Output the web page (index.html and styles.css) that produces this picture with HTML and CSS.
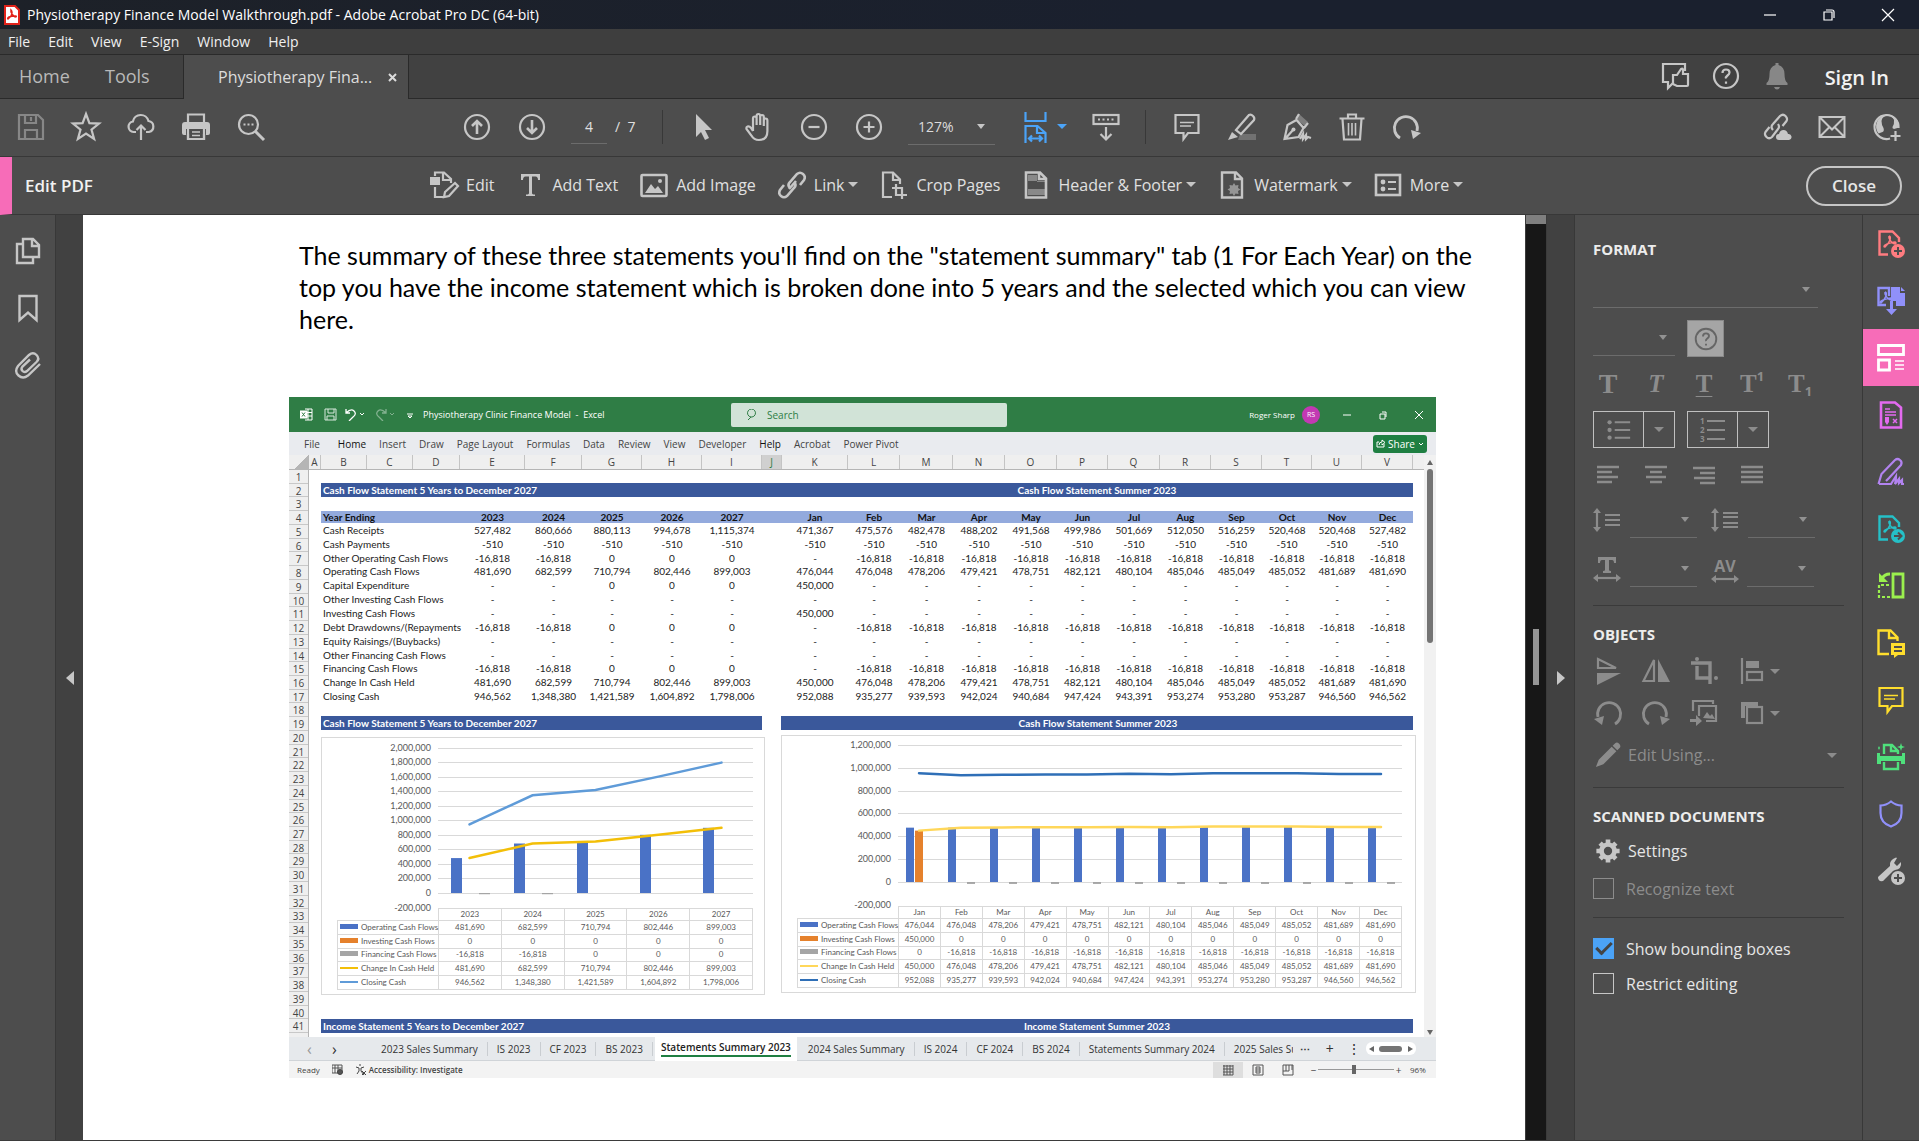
FILE: index.html
```html
<!DOCTYPE html>
<html lang="en">
<head>
<meta charset="utf-8">
<title>Physiotherapy Finance Model Walkthrough.pdf - Adobe Acrobat Pro DC (64-bit)</title>
<link rel="stylesheet" href="styles.css">
</head>
<body>
<svg class="defs" aria-hidden="true">
  <symbol id="save" viewBox="0 0 28 28"><path d="M2 2h19l5 5v19H2zM8 2v8h11V2M8 26V17h12v9M14 4v4"/></symbol>
  <symbol id="star" viewBox="0 0 28 28"><path d="M14 1l3.400 9.200 9.600.400-7.500 6 2.600 9.400L14 20.600 5.900 26l2.600-9.400L1 10.600l9.600-.400z"/></symbol>
  <symbol id="cloud" viewBox="0 0 28 28"><path d="M9 19H6.500a5.300 5.300 0 0 1-.600-10.500A8 8 0 0 1 21.500 8a5.600 5.600 0 0 1 .500 11H19M14 27V13M9.500 17L14 12.500l4.500 4.500"/></symbol>
  <symbol id="print" viewBox="0 0 28 28"><path d="M6 9V1.500h16V9M6 21v5h16v-5"/><path class="f" d="M0 12q0-3 3-3h22q3 0 3 3v8q0 2-2 2h-2v-6H4v6H2q-2 0-2-2z"/><path d="M6 15v11h16V15"/><path d="M10 19h8M10 22.500h8" stroke-width="1.500"/></symbol>
  <symbol id="find" viewBox="0 0 28 28"><circle cx="11.500" cy="11.500" r="9.500"/><path d="M18.500 18.500L27 27" stroke-width="3"/><path d="M6.500 11.500h2M10.500 11.500h2M14.500 11.500h2"/></symbol>
  <symbol id="up" viewBox="0 0 28 28"><circle cx="14" cy="14" r="12"/><path d="M14 21V8M9 13l5-5 5 5" stroke-width="2.600"/></symbol>
  <symbol id="down" viewBox="0 0 28 28"><circle cx="14" cy="14" r="12"/><path d="M14 7v13M9 15l5 5 5-5" stroke-width="2.600"/></symbol>
  <symbol id="arrow" viewBox="0 0 28 28"><path class="f" d="M6 1v23l5-5 4 8 4-2-4-8h7z"/></symbol>
  <symbol id="hand" viewBox="0 0 28 28"><path d="M8 18V5.500q0-2 1.800-2t1.800 2V12 3q0-2 1.800-2t1.800 2v9V4q0-2 1.800-2t1.800 2v9V7.500q0-2 1.800-2t1.800 2V18q0 9-8.500 9-5 0-7.500-4.500L1.500 16q-.500-2 1-2.500 2-.500 3.500 1.500l2 3"/></symbol>
  <symbol id="minus" viewBox="0 0 28 28"><circle cx="14" cy="14" r="12"/><path d="M8.500 14h11"/></symbol>
  <symbol id="plus" viewBox="0 0 28 28"><circle cx="14" cy="14" r="12"/><path d="M8.500 14h11M14 8.500v11"/></symbol>
  <symbol id="fit" viewBox="0 0 28 28"><path d="M1.500-1v9h20V-1M1.500 30V13h12l8 7v10M13 13v7h8M5 25.500h13M8 22.500l-3 3 3 3M15 22.500l3 3-3 3"/></symbol>
  <symbol id="keys" viewBox="0 0 28 28"><rect x="1.500" y="2" width="25" height="9"/><path d="M6 6.500h2M10.500 6.500h2M15 6.500h2M19.500 6.500h2M14 14v12M8.500 21l5.500 5.500 5.500-5.500"/></symbol>
  <symbol id="comment" viewBox="0 0 28 28"><path d="M2.500 2h23v18H15l-4.500 6v-6h-8z"/><path d="M7 9.500h14M7 13h11" stroke-width="1.600"/></symbol>
  <symbol id="marker" viewBox="0 0 28 28"><path class="f" opacity=".3" d="M12 21h16v6H10z"/><path d="M8 17L21 2q2-1 4 1t1 4L13 21z"/><path class="f" d="M0 27l4-8 6 5z"/></symbol>
  <symbol id="pen" viewBox="0 0 28 28"><path class="f" opacity=".4" d="M16 1l9 8-3 4-9-7z"/><path d="M1.500 26l3-14 9-5 7 8-5 9zM2 26l8-9M16 1l-3 5M25 10l-4 5M17 26l3-5v5l3-4v4l2-2 3 1"/><circle class="f" cx="10.500" cy="16.500" r="2"/></symbol>
  <symbol id="trash" viewBox="0 0 28 28"><path d="M1.500 5.500h25M10 5V1.500h8V5M4.500 6l1.500 20.500h16L23.500 6"/><path d="M10.500 10v12.500M14 10v12.500M17.500 10v12.500" stroke-width="1.600"/></symbol>
  <symbol id="redo" viewBox="0 0 28 28"><path d="M7 25A11.500 11.500 0 1 1 24 18" stroke-width="2.800"/><path class="f" d="M18 17l10 3-8 6z"/></symbol>
  <symbol id="undo" viewBox="0 0 28 28"><path d="M21 25A11.500 11.500 0 1 0 4 18" stroke-width="2.800"/><path class="f" d="M10 17L0 20l8 6z"/></symbol>
  <symbol id="link" viewBox="0 0 28 28"><path d="M12 17q-3-3 0-6l7-8q3-2.500 6 0t1 6l-4 5M16 11q3 3 0 6l-7 8q-3 2.500-6 0t-1-6l4-5M11 18l7-8" stroke-width="2.600"/></symbol>
  <symbol id="linkcloud" viewBox="0 0 28 28"><path d="M10 17q-3-3 0-6l7-8q3-2.500 5.500 0t1 5l-4 5M15 11q2 3 0 5l-6 8q-3 2.500-5.500 0t-1-5l4-5"/><path class="f" d="M16 27a3 3 0 0 1 0-6q1-4 4.500-4t4.500 4a3 3 0 0 1 1 6z"/></symbol>
  <symbol id="mail" viewBox="0 0 28 28"><path d="M1.500 4h25v20h-25zM2 4.500l12 12 12-12M2 23.500l9.500-9.500M26 23.500L16.500 14" stroke-width="2"/></symbol>
  <symbol id="user" viewBox="0 0 28 28"><path d="M17 25.500A12 12 0 1 1 25.500 15"/><path class="f" fill-rule="evenodd" d="M14 1.500a12 12 0 0 1 12 13l-5 1.500q-2-.500-1.500-2 2-3 1.500-7-1-4-6-4-6 0-6.500 5 0 4 2 7 1 3-1 4l-4 1.500A12 12 0 0 1 14 1.500z"/><path d="M22.500 18v10M17.500 23h10"/></symbol>
  <symbol id="like" viewBox="0 0 28 28"><path d="M24 9V2H2v18h5v6l5-5"/><path d="M12 13h4l4-6q2-1 2 1v4h5v11q0 1-1 1H16l-4-2z"/></symbol>
  <symbol id="help" viewBox="0 0 28 28"><circle cx="14" cy="14" r="12"/><path d="M10.500 11q0-3.500 3.500-3.500t3.500 3q0 1.500-2 3T14 16.500M14 19.500v2.200"/></symbol>
  <symbol id="bell" viewBox="0 0 28 28"><path class="f" d="M12.500 1h3v2q6 2 6 9 0 7 3 9v2h-21v-2q3-2 3-9 0-7 6-9zM11 25h6q-1 2.500-3 2.500T11 25z"/></symbol>
  <symbol id="edit" viewBox="0 0 28 28"><path class="f" d="M0 6h10v8H0z"/><path d="M5 5V1.500h9l7 6.500v4M13 2v7h7M5 16v10h8"/><path d="M14 26l1-5 10-9 3 3-9 10z"/></symbol>
  <symbol id="T" viewBox="0 0 28 28"><path class="f" d="M5 3h19v6h-2q0-3.500-2.500-3.500H16V22q0 1.500 3 1.500V25H10v-1.500q3 0 3-1.500V5.500H9.500Q7 5.500 7 9H5z"/></symbol>
  <symbol id="image" viewBox="0 0 28 28"><rect x="1.500" y="4" width="25" height="21" rx="1" stroke-width="2.600"/><path class="f" d="M5 22l6-9 4 5 3-3 5 7z"/><circle class="f" cx="20" cy="10" r="2"/></symbol>
  <symbol id="croppage" viewBox="0 0 28 28"><path d="M12 26H3V1.500h10l7 7V13M13 2v7h7M12 17h10v11M16 13v11h11"/></symbol>
  <symbol id="header" viewBox="0 0 28 28"><path class="f" opacity=".5" d="M6 4h9v7h8v-1H6zM6 18h17v6H6z"/><path d="M4 1.500h14l6 6v19H4zM17 2v6h6" stroke-width="2.600"/></symbol>
  <symbol id="water" viewBox="0 0 28 28"><path class="f" opacity=".6" d="M16 12l1.500 2.500 3-.500-.500 3 2.500 1.500-2.500 1.500.500 3-3-.500L16 25l-1.500-2.500-3 .500.500-3-2.500-1.500 2.500-1.500-.500-3 3 .500z"/><path d="M4 1.500h14l6 6v19H4zM17 2v6h6" stroke-width="2.400"/></symbol>
  <symbol id="more" viewBox="0 0 28 28"><rect x="2" y="4" width="24" height="20" stroke-width="2.600"/><circle class="f" cx="9" cy="11" r="2.400"/><circle class="f" cx="9" cy="18" r="2.400"/><path d="M14 11h8M14 18h8"/></symbol>
  <symbol id="pages" viewBox="0 0 28 28"><path d="M9 2h10l6 6v12H9zM18 2v7h7M8 7H3v19h16v-5" stroke-width="2.400"/></symbol>
  <symbol id="mark" viewBox="0 0 28 28"><path d="M5.500 2h17v24L14 18.500 5.500 26z" stroke-width="2.400"/></symbol>
  <symbol id="clip" viewBox="0 0 28 28"><path d="M26 13L14 24.500q-5 4-9.500 0t-.500-9.500L15 4q4-3.500 7.500 0t0 7L13 20q-2.500 2-4.500 0t0-4.500L16 8.500" stroke-width="2.400"/></symbol>
  <symbol id="bullets" viewBox="0 0 28 28"><path d="M9 5h18M9 14h18M9 23h18"/><circle class="f" cx="3" cy="5" r="2.500"/><circle class="f" cx="3" cy="14" r="2.500"/><circle class="f" cx="3" cy="23" r="2.500"/></symbol>
  <symbol id="al" viewBox="0 0 28 28"><path d="M3 6h22M3 11h15M3 16h21M3 21h15" stroke-width="2.600"/></symbol>
  <symbol id="ac" viewBox="0 0 28 28"><path d="M3 6h22M8 11h12M4 16h20M8 21h12" stroke-width="2.600"/></symbol>
  <symbol id="ar" viewBox="0 0 28 28"><path d="M3 7h22M10 12h15M4 17h21M10 22h15" stroke-width="2.600"/></symbol>
  <symbol id="aj" viewBox="0 0 28 28"><path d="M3 6h22M3 11h22M3 16h22M3 21h22" stroke-width="2.600"/></symbol>
  <symbol id="ls" viewBox="0 0 28 28"><path d="M4 5v18M12 9h15M12 14h15M12 19h15"/><path class="f" d="M0 7l4-5 4 5zM0 21l4 5 4-5z"/></symbol>
  <symbol id="ps" viewBox="0 0 28 28"><path d="M4 5v18M12 7h15M12 11h15M12 17h15M12 21h15"/><path class="f" d="M0 7l4-5 4 5zM0 21l4 5 4-5z"/></symbol>
  <symbol id="ts" viewBox="0 0 28 28"><path d="M3 23h22"/><path class="f" d="M5 19l-5 4 5 4zM23 19l5 4-5 4zM5 2h18v6h-2q0-3-2-3h-3v10q0 1 2 1v2h-8v-2q2 0 2-1V5H9Q7 5 7 8H5z"/></symbol>
  <symbol id="lr" viewBox="0 0 28 8"><path d="M3 4h22"/><path class="f" d="M5 0L0 4l5 4zM23 0l5 4-5 4z"/></symbol>
  <symbol id="fv" viewBox="0 0 28 28"><path d="M4 2v9h18zM4 2v9" /><path class="f" d="M3 16h24L3 28z"/></symbol>
  <symbol id="fh" viewBox="0 0 28 28"><path d="M12 3v21H1.500z"/><path class="f" d="M16 2v23h12z"/></symbol>
  <symbol id="crop" viewBox="0 0 28 28"><path d="M1 6h19v21M7 9v12h14" stroke-width="3.400"/><circle class="f" cx="7" cy="2" r="2"/><circle class="f" cx="26" cy="21" r="2"/></symbol>
  <symbol id="oal" viewBox="0 0 28 28"><path d="M4 1v26"/><path class="f" d="M8 4h13v7H8z"/><rect x="9" y="15" width="15" height="8"/></symbol>
  <symbol id="rep" viewBox="0 0 28 28"><path d="M3 12V2h20v3M9 17V7h17v15H16"/><path class="f" d="M13 19l4-6 3 4 2-2 3 5zM0 20h6v-4l6 6-6 5v-4H0z"/></symbol>
  <symbol id="arr" viewBox="0 0 28 28"><path class="f" d="M3 3h17v4H7v12H3z"/><rect x="9" y="8" width="15" height="16"/></symbol>
  <symbol id="pencil" viewBox="0 0 28 28"><path class="f" d="M1 27l3-8L18 5l5 5L9 24zM19 4l3-3q2-1 4 1t1 4l-3 3z"/></symbol>
  <symbol id="gear" viewBox="0 0 28 28"><circle cx="14" cy="14" r="7" stroke-width="5"/><path d="M14 1.500v4M14 22.500v4M1.500 14h4M22.500 14h4M5.500 5.500l2.500 2.500M20 20l2.500 2.500M22.500 5.500L20 8M8 20l-2.500 2.500" stroke-width="5"/></symbol>
  <symbol id="acro" viewBox="0 0 28 28"><path d="M13 9q2 0 1 4-1 3-5 7-2 0 0-2 3-2 10-3 2 1 0 2-4-1-6-6 0-2 0-2" stroke-width="1.500"/></symbol>
  <symbol id="r1" viewBox="0 0 28 28"><path d="M11 24.500H2.500V1.500h13L22 8v4" stroke-width="2.400"/><use href="#acro" x="-1" y="-3" width="28" height="28"/><circle class="f" cx="21" cy="21" r="7"/><path class="cut" d="M21 17v8M17 21h8"/></symbol>
  <symbol id="r2" viewBox="0 0 28 28"><path d="M9 18H1.500V1H12v8" stroke-width="2.400"/><use href="#acro" x="-5" y="-4" width="28" height="28"/><path class="f" d="M14 0h9v6h5v13h-9v-5h-5zM24 0l4 4h-4zM13 14h3v8h4l-5.500 6L9 22h4z"/></symbol>
  <symbol id="r3" viewBox="0 0 28 28"><path d="M1.500 1.500h25v9h-25zM1.500 16h11v10h-11z" stroke-width="2.800"/><path d="M18 17h9M18 21h9M18 25h9" stroke-width="1.600"/></symbol>
  <symbol id="r4" viewBox="0 0 28 28"><path d="M4 1.500h14l6 5v20H4z" stroke-width="2.600"/><path d="M8 8h5M8 11h11M8 14h11M16 18l4 4M20 18l-4 4" stroke-width="1.500"/><path class="f" d="M8 16h4v5l-2 3-2-3z"/></symbol>
  <symbol id="r5" viewBox="0 0 28 28"><path d="M1.500 26l3-10L18 2q2.500-2 5 0t1 5L12 20l-3 3M2 26h12l5-8q0 5-1 8l4-5v4l3-3v4h2"/></symbol>
  <symbol id="r6" viewBox="0 0 28 28"><path d="M11 24.500H2.500V1.500h13L22 8v4" stroke-width="2.400"/><use href="#acro" x="-1" y="-3" width="28" height="28"/><circle class="f" cx="21" cy="21" r="7"/><path class="cut" d="M17 21h7M21 17.500l3.500 3.500-3.500 3.500"/></symbol>
  <symbol id="r7" viewBox="0 0 28 28"><path d="M16 2h10v23H16z" stroke-width="2.800"/><path d="M13 25H2V13h11" stroke-dasharray="3 2"/><path d="M13 2q-6 0-8 5" stroke-width="3"/><path class="f" d="M2 1v9h9z"/></symbol>
  <symbol id="r8" viewBox="0 0 28 28"><path d="M12 25H1.500V1.500h12l7 7V12M12 2v7h8" stroke-width="2.400"/><path class="f" d="M14 14h14v12h-7l-4 3v-3h-3z"/><path class="cut" d="M17 18h8M17 22h8" stroke-width="1.300"/></symbol>
  <symbol id="r10" viewBox="0 0 28 28"><path d="M7 11V2h8l6 6v3M14 2v6h6M7 19v7h14v-7" stroke-width="2.400"/><path class="f" d="M0 10h3v3h22v-3h3v11h-4v-3H4v3H0zM24 0l1 3 3 1-3 1-1 3-1-3-3-1 3-1zM2 3l1 2-1 2-1-2z"/></symbol>
  <symbol id="r11" viewBox="0 0 28 28"><path d="M14 1.500q5 4 10.500 4V13q0 10-10.500 13.500Q3.500 23 3.500 13V5.500q5.500 0 10.500-4z"/></symbol>
  <symbol id="r12" viewBox="0 0 28 28"><path class="f" d="M1 20L13 9q-1-6 6-8.500l1 .500-3 5 3 3 4-4q1 7-6 8l-2 1L6 24q-5 1-5-4z"/><circle class="f" cx="21" cy="21" r="7"/><path class="cut" d="M21 17v8M17 21h8"/></symbol>
</svg>

<header class="titlebar">
  <svg class="app" viewBox="0 0 16 20"><path d="M1 1h10l4 4v14H1z" fill="#fff" stroke="#e2231a" stroke-width="2"/><path d="M7 5q2 2 0 6l-3 3q-1-1 1-2t7-1q1 1-1 1-3-2-4-5z" fill="none" stroke="#e2231a" stroke-width="1.500"/></svg>
  <h1>Physiotherapy Finance Model Walkthrough.pdf - Adobe Acrobat Pro DC (64-bit)</h1>
  <div class="win">
    <button aria-label="Minimize"><svg viewBox="0 0 12 12"><path d="M0 6h12"/></svg></button>
    <button aria-label="Restore"><svg viewBox="0 0 12 12"><path d="M1 3h8v8H1zM3 1h6q2 0 2 2v6"/></svg></button>
    <button aria-label="Close window"><svg viewBox="0 0 12 12"><path d="M0 0l12 12M12 0L0 12"/></svg></button>
  </div>
</header>

<nav class="menu"><a href="#">File</a><a href="#">Edit</a><a href="#">View</a><a href="#">E-Sign</a><a href="#">Window</a><a href="#">Help</a></nav>

<div class="tabs">
  <a href="#" class="t-home">Home</a><a href="#" class="t-tools">Tools</a>
  <div class="t-doc"><span>Physiotherapy Fina...</span><button aria-label="Close tab"><svg viewBox="0 0 9 9"><path d="M1 1l7 7M8 1L1 8"/></svg></button></div>
  <div class="t-right">
    <button aria-label="Feedback"><svg class="i"><use href="#like"/></svg></button>
    <button aria-label="Help"><svg class="i"><use href="#help"/></svg></button>
    <button aria-label="Notifications" class="dim"><svg class="i"><use href="#bell"/></svg></button>
    <a href="#">Sign In</a>
  </div>
</div>

<div class="toolbar">
  <button class="tb dim" aria-label="Save"><svg class="i"><use href="#save"/></svg></button>
  <button class="tb" aria-label="Star"><svg class="i"><use href="#star"/></svg></button>
  <button class="tb" aria-label="Upload"><svg class="i"><use href="#cloud"/></svg></button>
  <button class="tb" aria-label="Print"><svg class="i"><use href="#print"/></svg></button>
  <button class="tb" aria-label="Find"><svg class="i"><use href="#find"/></svg></button>
  <div class="mid">
    <button class="tb" aria-label="Previous page"><svg class="i"><use href="#up"/></svg></button>
    <button class="tb" aria-label="Next page"><svg class="i"><use href="#down"/></svg></button>
    <input class="page-no" aria-label="Page number" value="4"><span class="of">/&nbsp; 7</span>
    <i class="sep"></i>
    <button class="tb" aria-label="Select"><svg class="i"><use href="#arrow"/></svg></button>
    <button class="tb" aria-label="Pan"><svg class="i"><use href="#hand"/></svg></button>
    <button class="tb" aria-label="Zoom out"><svg class="i"><use href="#minus"/></svg></button>
    <button class="tb" aria-label="Zoom in"><svg class="i"><use href="#plus"/></svg></button>
    <span class="sel zoom"><select aria-label="Zoom"><option>127%</option></select></span>
    <button class="tb fit" aria-label="Fit width"><svg class="i"><use href="#fit"/></svg><i class="car"></i></button>
    <button class="tb" aria-label="Keyboard"><svg class="i"><use href="#keys"/></svg></button>
    <i class="sep s2"></i>
    <button class="tb" aria-label="Comment"><svg class="i"><use href="#comment"/></svg></button>
    <button class="tb" aria-label="Highlight"><svg class="i"><use href="#marker"/></svg></button>
    <button class="tb" aria-label="Sign"><svg class="i"><use href="#pen"/></svg></button>
    <button class="tb" aria-label="Delete"><svg class="i"><use href="#trash"/></svg></button>
    <button class="tb" aria-label="Rotate"><svg class="i"><use href="#redo"/></svg></button>
  </div>
  <div class="end">
    <button class="tb" aria-label="Share link"><svg class="i"><use href="#linkcloud"/></svg></button>
    <button class="tb" aria-label="Email"><svg class="i"><use href="#mail"/></svg></button>
    <button class="tb" aria-label="Add person"><svg class="i"><use href="#user"/></svg></button>
  </div>
</div>

<div class="editbar">
  <h2>Edit PDF</h2>
  <div class="tools">
    <button><svg class="i"><use href="#edit"/></svg>Edit</button>
    <button><svg class="i"><use href="#T"/></svg>Add Text</button>
    <button><svg class="i"><use href="#image"/></svg>Add Image</button>
    <button><svg class="i"><use href="#link"/></svg>Link<i class="car"></i></button>
    <button><svg class="i"><use href="#croppage"/></svg>Crop Pages</button>
    <button><svg class="i"><use href="#header"/></svg>Header &amp; Footer<i class="car"></i></button>
    <button><svg class="i"><use href="#water"/></svg>Watermark<i class="car"></i></button>
    <button><svg class="i"><use href="#more"/></svg>More<i class="car"></i></button>
  </div>
  <button class="close">Close</button>
</div>

<div class="work">
  <nav class="rail left">
    <button aria-label="Page thumbnails"><svg class="i"><use href="#pages"/></svg></button>
    <button aria-label="Bookmarks"><svg class="i"><use href="#mark"/></svg></button>
    <button aria-label="Attachments"><svg class="i"><use href="#clip"/></svg></button>
  </nav>
  <div class="gutter"><i class="tri l"></i></div>
  <main class="page">
    <p class="copy">The summary of these three statements you'll find on the "statement summary" tab (1 For Each Year) on the<br>top you have the income statement which is broken done into 5 years and the selected which you can view<br>here.</p>
    <figure class="excel">
      <div class="x-title">
        <div class="x-left">
          <svg class="x13" viewBox="0 0 13 13"><path d="M5 1h7v11H5M8 1v11M5 4.500h7M5 8h7" fill="none" stroke="#fff"/><path d="M0 3h7v7H0z" fill="#fff"/><path d="M2 4.500l3 4M5 4.500l-3 4" stroke="#2f7d45"/></svg>
          <svg class="x13 g1" viewBox="0 0 13 13"><path d="M1 1h11v11H1zM4 1v4h6V1M3 12V8h7v4" fill="none" stroke="#d7e8dc"/></svg>
          <svg class="x20" viewBox="0 0 20 13"><path d="M1 1v4h4M1 5q5-5 8-2t-1 6l-4 4" fill="none" stroke="#fff" stroke-width="1.300"/><path d="M15 5l2 2 2-2" fill="none" stroke="#fff"/></svg>
          <svg class="x20 fade" viewBox="0 0 20 13"><path d="M11 1v4H7M11 5Q6 0 3 3t1 6l4 4" fill="none" stroke="#fff" stroke-width="1.300"/><path d="M15 5l2 2 2-2" fill="none" stroke="#fff"/></svg>
          <svg class="x5" viewBox="0 0 6 6"><path d="M0 1h6M1 3l2 2 2-2z" fill="none" stroke="#fff"/></svg>
          <span>Physiotherapy Clinic Finance Model &nbsp;-&nbsp; Excel</span>
        </div>
        <label class="x-search"><svg viewBox="0 0 12 12"><path d="M4 8L1 11M4 8a4 4 0 1 1 1 0z" fill="none" stroke="#2f7d45"/></svg><input aria-label="Search" placeholder="Search"></label>
        <div class="x-right"><span>Roger Sharp</span><b class="ava">RS</b>
          <svg viewBox="0 0 8 8"><path d="M0 4h8"/></svg><svg viewBox="0 0 8 8"><path d="M1 3h5v5H1zM3 1h4v5"/></svg><svg viewBox="0 0 8 8"><path d="M0 0l8 8M8 0L0 8"/></svg></div>
      </div>
      <nav class="x-menu"><a href="#">File</a><a href="#" class="on">Home</a><a href="#">Insert</a><a href="#">Draw</a><a href="#">Page Layout</a><a href="#">Formulas</a><a href="#">Data</a><a href="#">Review</a><a href="#">View</a><a href="#">Developer</a><a href="#" class="on">Help</a><a href="#">Acrobat</a><a href="#">Power Pivot</a><button><svg class="sh" viewBox="0 0 9 9"><path d="M3 3H1v5h7V5M3 6q0-3 3-3V1l3 2.500L6 6V4.500"/></svg>Share<svg class="cv" viewBox="0 0 6 4"><path d="M1 1l2 2 2-2"/></svg></button></nav>
      <div class="x-grid">
        <div class="rownums"><i class="corner"></i><ol id="rows"></ol></div>
        <div class="cells">
          <div class="letters" id="letters"></div>
          <div class="sheet">
            <div class="band full"><span>Cash Flow Statement 5 Years to December 2027</span><span class="b2">Cash Flow Statement Summer 2023</span></div>
            <table class="flows" id="flows"></table>
            <div class="bands"><div class="band"><span>Cash Flow Statement 5 Years to December 2027</span></div><div class="band mid-t"><span>Cash Flow Statement Summer 2023</span></div></div>
            <div class="charts"><section class="chart" id="c1"></section><section class="chart up2" id="c2"></section></div>
            <div class="band full"><span>Income Statement 5 Years to December 2027</span><span class="b2">Income Statement Summer 2023</span></div>
          </div>
        </div>
        <div class="x-scroll"><i class="tri u"></i><i class="thumb"></i><i class="tri d"></i></div>
      </div>
      <nav class="x-tabs"><span class="ch">&#8249;</span><span class="ch ch2">&#8250;</span><a href="#">2023 Sales Summary</a><a href="#">IS 2023</a><a href="#">CF 2023</a><a href="#">BS 2023</a><a href="#" class="cur"><span>Statements Summary 2023</span></a><a href="#">2024 Sales Summary</a><a href="#">IS 2024</a><a href="#">CF 2024</a><a href="#">BS 2024</a><a href="#">Statements Summary 2024</a><a href="#" class="cutoff">2025 Sales Su</a><span class="dots">&#8943;</span><span class="add">+</span><span class="add">&#8942;</span><span class="hs"><i class="tri l"></i><i class="bar"></i><i class="tri"></i></span></nav>
      <div class="x-status"><span>Ready</span>
        <svg class="s1" viewBox="0 0 11 11"><path d="M0 1h10v8H0zM0 4h10M3 1v8M6 1v8" fill="none" stroke="#555"/><circle cx="8" cy="8" r="2.500" fill="#555"/></svg>
        <svg class="s2i" viewBox="0 0 11 11"><path d="M5 0v2M1 3l3 1v3L2 10M9 3L6 4v3l3 4M7 7l4 4M11 7l-4 4" fill="none" stroke="#444"/></svg>
        <b>Accessibility: Investigate</b>
        <div class="views"><span class="vsel"><svg viewBox="0 0 10 10"><path d="M0 1h10M0 4h10M0 7h10M0 10h10M1 0v10M4 0v10M7 0v10M10 0v10"/></svg></span><span><svg viewBox="0 0 10 10"><path d="M0 0h10v10H0zM3 2h4v6H3zM3 4h4M3 6h4"/></svg></span><span><svg viewBox="0 0 10 10"><path d="M0 0h10v10H0zM3 0v6M6 0v6H0M9 0v5"/></svg></span></div>
        <span class="pm">&minus;</span><input type="range" aria-label="Sheet zoom" min="0" max="100" value="47"><span class="pm">+</span><span class="pc">96%</span></div>
    </figure>
  </main>
  <div class="vbar"><i class="vthumb"></i><i class="grip"></i></div>
  <div class="gutter"><i class="tri"></i></div>
  <aside class="panel">
    <h3>FORMAT</h3>
    <span class="sel font"><select aria-label="Font"></select></span>
    <div class="row r-size"><span class="sel size"><select aria-label="Font size"></select></span><button class="swatch" aria-label="Colour"><svg class="i"><use href="#help"/></svg></button></div>
    <div class="cells5 r-t">
      <button class="g tb1">T</button><button class="g it">T</button><button class="g un">T</button><button class="g">T<sup>1</sup></button><button class="g">T<sub>1</sub></button>
    </div>
    <div class="row lists">
      <div class="lb"><button aria-label="Bullets"><svg class="i"><use href="#bullets"/></svg></button><button class="dd" aria-label="Bullet style"><i class="car"></i></button></div>
      <div class="lb"><button aria-label="Numbering" class="nums"><span>1<br>2<br>3</span><svg viewBox="0 0 18 24"><path d="M0 3h18M0 12h18M0 21h18"/></svg></button><button class="dd" aria-label="Number style"><i class="car"></i></button></div>
    </div>
    <div class="cells5 r-al">
      <button aria-label="Align left"><svg class="i"><use href="#al"/></svg></button><button aria-label="Align centre"><svg class="i"><use href="#ac"/></svg></button><button aria-label="Align right"><svg class="i"><use href="#ar"/></svg></button><button aria-label="Justify"><svg class="i"><use href="#aj"/></svg></button>
    </div>
    <div class="row sp"><svg class="i"><use href="#ls"/></svg><span class="sel"><select aria-label="Line spacing"></select></span><svg class="i"><use href="#ps"/></svg><span class="sel"><select aria-label="Paragraph spacing"></select></span></div>
    <div class="row sp"><svg class="i"><use href="#ts"/></svg><span class="sel"><select aria-label="Horizontal scale"></select></span><span class="av">AV<svg><use href="#lr"/></svg></span><span class="sel"><select aria-label="Character spacing"></select></span></div>
    <hr>
    <h3>OBJECTS</h3>
    <div class="cells5 ob">
      <button aria-label="Flip vertical"><svg class="i"><use href="#fv"/></svg></button><button aria-label="Flip horizontal"><svg class="i"><use href="#fh"/></svg></button><button aria-label="Crop"><svg class="i"><use href="#crop"/></svg></button><button aria-label="Align objects"><svg class="i"><use href="#oal"/></svg></button><i class="car"></i>
      <button aria-label="Rotate left"><svg class="i"><use href="#undo"/></svg></button><button aria-label="Rotate right"><svg class="i"><use href="#redo"/></svg></button><button aria-label="Replace image"><svg class="i"><use href="#rep"/></svg></button><button aria-label="Arrange"><svg class="i"><use href="#arr"/></svg></button><i class="car"></i>
    </div>
    <button class="line using"><svg class="i"><use href="#pencil"/></svg>Edit Using...<i class="car"></i></button>
    <hr>
    <h3 class="sc">SCANNED DOCUMENTS</h3>
    <button class="line set"><svg class="i"><use href="#gear"/></svg>Settings</button>
    <label class="ck off"><input type="checkbox" disabled>Recognize text</label>
    <hr class="h3r">
    <label class="ck"><input type="checkbox" checked>Show bounding boxes</label>
    <label class="ck"><input type="checkbox">Restrict editing</label>
  </aside>
  <nav class="rail right">
    <button class="k1" aria-label="Create PDF"><svg class="i"><use href="#r1"/></svg></button>
    <button class="k2" aria-label="Combine files"><svg class="i"><use href="#r2"/></svg></button>
    <button class="k3" aria-label="Edit PDF"><svg class="i"><use href="#r3"/></svg></button>
    <button class="k4" aria-label="Request signatures"><svg class="i"><use href="#r4"/></svg></button>
    <button class="k5" aria-label="Fill and sign"><svg class="i"><use href="#r5"/></svg></button>
    <button class="k6" aria-label="Export PDF"><svg class="i"><use href="#r6"/></svg></button>
    <button class="k7" aria-label="Organize pages"><svg class="i"><use href="#r7"/></svg></button>
    <button class="k8" aria-label="Send for comments"><svg class="i"><use href="#r8"/></svg></button>
    <button class="k8" aria-label="Comment"><svg class="i"><use href="#comment"/></svg></button>
    <button class="k10" aria-label="Scan and OCR"><svg class="i"><use href="#r10"/></svg></button>
    <button class="k2" aria-label="Protect"><svg class="i"><use href="#r11"/></svg></button>
    <button aria-label="More tools"><svg class="i"><use href="#r12"/></svg></button>
  </nav>
</div>
<script src="sheet.js"></script>
</body>
</html>
```
FILE: styles.css
```css
*{box-sizing:border-box}
body{margin:0;height:100vh;display:flex;flex-direction:column;overflow:hidden;background:#4d4d4d;color:#e6e6e6;font:16px/20px "Open Sans","Noto Sans",sans-serif;border-bottom:1px solid #3b3b3b}
h1,h2,h3,p,figure,ol{margin:0;padding:0;font-weight:400}
a{color:inherit;text-decoration:none}
button{font:inherit;color:inherit;background:none;border:0;padding:0;margin:0;display:flex;align-items:center;justify-content:center}
.defs{position:absolute;width:0;height:0}
.i{width:28px;height:28px;flex:none;overflow:visible}
svg{fill:none;stroke:currentColor;stroke-width:2.2}
symbol{overflow:visible}
.f{fill:currentColor;stroke:none}
.cut{stroke:#4d4d4d;stroke-width:2}
.car{flex:none;width:0;height:0;border:5px solid transparent;border-top:5px solid currentColor;border-bottom:0}
.tri{width:0;height:0;border:7px solid transparent;border-left:8px solid #c6c6c6;border-right:0}
.tri.l{border-left:0;border-right:8px solid #c6c6c6}

.titlebar{flex:none;height:29px;display:flex;align-items:center;background:linear-gradient(90deg,#1d2128,#1a202e 60%);color:#fff;padding:0 2px 0 4px}
.app{width:16px;height:20px}
.titlebar h1{font-size:14px;margin-left:7px}
.win{margin-left:auto;display:flex}
.win button{width:59px;height:29px}
.win svg{width:12px;height:12px;stroke-width:1.2;overflow:visible}
.menu{flex:none;height:26px;display:flex;align-items:center;gap:18px;padding:0 8px;background:#3e3e3e;border-bottom:1px solid #2a2a2a;font-size:14px;color:#f0f0f0}

.tabs{flex:none;height:44px;display:flex;align-items:stretch;background:#414141;color:#b9b9b9;font-size:18px;border-bottom:1px solid #2a2a2a}
.tabs>a{line-height:42px}
.t-home{padding-left:19px;width:105px}
.t-tools{width:78px}
.t-doc{width:226px;height:44px;border:1px solid #2a2a2a;border-width:0 1px;background:#4d4d4d;color:#dcdcdc;font-size:16px;display:flex;align-items:center;justify-content:space-between;padding:0 11px 0 34px}
.t-doc svg{width:9px;height:9px;stroke-width:2}
.t-right{margin-left:auto;display:flex;align-items:center;color:#c6c6c6;padding:0 30px 2px 0}
.t-right button{width:51px}
.t-right a{color:#f2f2f2;font-size:20px;font-weight:600;margin-left:22px;padding-top:4px}
.dim{color:#878787!important}

.toolbar{flex:none;height:58px;display:flex;align-items:center;padding:0 0 2px 3px;border-bottom:1px solid #383838;color:#c6c6c6}
.tb{width:55px;height:50px}
.mid{display:flex;align-items:center;margin-left:171px}
.page-no{width:36px;height:34px;margin:0 8px 0 12px;border:0;border-bottom:1px solid #6c6c6c;background:none;color:#e0e0e0;font:14px "Open Sans",sans-serif;text-align:center;padding:0}
.of{width:47px;font-size:14px;color:#e0e0e0}
.sep{width:1px;height:34px;background:#383838;margin-right:13px}
.s2{margin:0 13px 0 12px}
.sel{position:relative;display:block}
.sel select{appearance:none;display:block;width:100%;height:36px;border:0;border-bottom:1px solid #6c6c6c;border-radius:0;background:none;color:#dcdcdc;font:14px "Open Sans",sans-serif;padding:0 10px}
.sel:after{content:"";position:absolute;right:8px;top:15px;border:4px solid transparent;border-top:5px solid #929292;border-bottom:0}
.zoom{width:87px;margin:0 17px 0 12px}
.zoom:after{right:10px;border-top-color:#c6c6c6}
.fit{color:#4ba3f7;gap:5px;width:66px}
.end{display:flex;margin-left:auto;padding-right:5px}

.editbar{flex:none;height:58px;display:flex;align-items:center;border-bottom:1px solid #383838;border-left:12px solid #f76cb8;padding-right:17px}
.editbar h2{font-size:17px;line-height:20px;font-weight:600;color:#f2f2f2;padding-left:13px;width:418px}
.tools{display:flex;gap:22px;color:#e0e0e0;padding-bottom:2px}
.tools .i{color:#c6c6c6;margin-right:8px}
.tools .car{color:#c6c6c6;margin-left:4px}
.tools button{white-space:nowrap}
.close{margin-left:auto;width:96px;height:40px;border:2px solid #c6c6c6;border-radius:20px;font-size:17px;font-weight:600}

.work{flex:1;min-height:0;display:flex}
.rail{flex:none;width:56px;display:flex;flex-direction:column;color:#c6c6c6}
.rail button{height:57px;width:100%}
.left{padding-top:7px;border-right:1px solid #383838}
.right{width:57px;border-left:1px solid #383838}
.k1{color:#ff7c80}.k2{color:#9090fa}.k4{color:#e36af0}.k5{color:#b283f0}.k6{color:#25c0c7}.k7{color:#9bf04e}.k8{color:#ffde2d}.k10{color:#4fe07c}
.rail .k3{background:#f76cb8;color:#fff}
.gutter{flex:none;width:27px;background:#414141;display:flex;align-items:center;justify-content:center}
.page{flex:1;min-width:0;background:#fff;color:#000;padding-top:24px;overflow:hidden}
.copy{font:25px/32px Lato,"Open Sans",sans-serif;padding-left:216px;white-space:nowrap;margin-bottom:62px}
.vbar{flex:none;width:22px;background:#171717;border:1px solid #3b3b3b;border-width:0 1px;display:flex;flex-direction:column;align-items:center}
.vthumb{width:20px;height:9px;background:#7f7f7f;margin-bottom:405px}
.grip{width:6px;height:56px;background:#959595}

.panel{flex:none;width:288px;padding:24px 18px 0 18px;border-left:1px solid #383838;color:#8c8c8c}
.panel h3{font-size:15px;line-height:20px;font-weight:700;color:#ececec}
.font{width:225px;margin-top:13px}
.row{display:flex}
.size{width:82px}
.r-size{margin-top:12px;gap:12px}
.swatch{width:37px;height:37px;background:#a5a5a5;color:#666;border:1px solid #8a8a8a}
.swatch .i{width:24px;height:24px}
.cells5{display:grid;grid-template-columns:repeat(4,48px) 48px;margin-left:-9px}
.cells5 button{height:28px}
.r-t{margin-top:13px}
.g{font:600 25px/28px "Liberation Serif","DejaVu Serif",serif;color:#8c8c8c}
.tb1{font-weight:700;font-size:28px}
.it{font-style:italic}
.un{text-decoration:underline;text-underline-offset:4px;text-decoration-thickness:1px}
.g sup,.g sub{font:700 13px/13px "Open Sans",sans-serif}
.g sup{align-self:flex-start}
.g sub{align-self:flex-end}
.lists{gap:12px;margin-top:13px}
.lb{display:flex;width:82px;height:37px;border:1px solid #c0c0c0}
.lb button{width:50px}
.lb .dd{width:31px;border-left:1px solid #c0c0c0}
.lb .i{width:26px;height:24px}
.nums{gap:3px}
.nums span{font:700 8px/9px "Open Sans",sans-serif}
.nums svg{width:18px;height:24px}
.r-al{margin-top:13px}
.sp{align-items:flex-end;margin-top:13px}
.sp+.sp{margin-top:13px}
.sp .i{margin:0 9px 4px 0}
.sp .sel{width:67px;margin-right:14px}
.av{width:28px;margin-right:8px;font:700 16px/18px "Open Sans",sans-serif;text-align:center;padding-bottom:4px}
.av svg{display:block;width:28px;height:8px}
hr{border:0;border-top:1px solid #3a3a3a;margin:18px 0 0;width:251px}
.panel hr+h3{margin-top:18px}
.ob{align-items:center;grid-template-columns:repeat(4,48px) 10px;row-gap:14px;margin-top:13px}
.ob .car{margin-left:-6px}
.line{width:100%;justify-content:flex-start;height:28px;padding-left:2px}
.line .i{width:26px;height:26px;margin-right:7px}
.using{margin-top:14px}
.using .car{margin:0 7px 0 auto}
.set{margin-top:11px;color:#e6e6e6}
.set .i{color:#c6c6c6}
.ck{display:flex;align-items:center;gap:12px;height:21px;color:#e6e6e6;margin-bottom:14px}
.off{color:#8c8c8c;margin:13px 0 0}
.h3r{margin-bottom:20px}
.ck input{appearance:none;width:21px;height:21px;margin:0;border:1px solid #c6c6c6;flex:none}
.off input{border-color:#8c8c8c}
.ck input:checked{border:0;background:#4ba3f7;display:grid;place-items:center}
.ck input:checked:after{content:"";width:13px;height:6px;border:3px solid #444;border-width:0 0 3px 3px;rotate:-45deg;margin-bottom:4px}

/* Spreadsheet figure */
.excel{width:1147px;margin-left:206px;font-size:9px;line-height:12px;color:#222}
.excel svg{stroke-width:1}
.x-title{height:35px;background:#2f7d45;color:#fff;display:flex;align-items:center}
.x-left{width:442px;display:flex;align-items:center;padding-left:11px}
.x13{width:13px;height:13px}.g1{margin:0 8px 0 11px}
.x20{width:20px;height:13px;margin-right:10px}.fade{opacity:.4}
.x5{width:6px;height:6px;margin:2px 10px 0 2px}
.x-search{width:276px;height:24px;background:#d1e3d7;border-radius:2px;display:flex;align-items:center;gap:8px;padding-left:16px}
.x-search svg{width:12px;height:12px}
.x-search input{border:0;background:none;font:10px "Open Sans",sans-serif;padding:0;width:120px}
.x-search input::placeholder{color:#2f7d45;opacity:1}
.x-right{flex:1;display:flex;align-items:center;justify-content:flex-end;padding-right:13px;font-size:8px}
.ava{width:18px;height:18px;border-radius:50%;background:#c239b3;font:7px/18px "Open Sans",sans-serif;text-align:center;margin:0 23px 0 7px}
.x-right svg{width:8px;height:8px;overflow:visible}
.x-right svg+svg{margin-left:28px}
.x-menu{height:23px;background:#e9ebef;display:flex;align-items:center;padding:0 9px 0 15px;gap:13px;color:#444;font-size:10px;line-height:14px}
.x-menu .on{color:#111}
.x-menu a:nth-child(2){margin-left:5px}
.x-menu button{margin-left:auto;height:18px;width:54px;border-radius:3px;background:#1f7f42;color:#fff;font-size:10px;gap:3px}
.sh{width:9px;height:9px}.cv{width:6px;height:4px}
.x-grid{display:flex;height:582px;background:#fff;overflow:hidden}
.rownums{width:20px;flex:none;background:#efefef;border-right:1px solid #b5b5b5}
.corner{display:block;height:15px;border-bottom:1px solid #b5b5b5;background:linear-gradient(135deg,transparent 60%,#b5b5b5 60%)}
.rownums ol{list-style:none;display:grid;grid-template-rows:repeat(41,minmax(0,1fr)) 13px;height:576px}
.rownums li{text-align:center;color:#444;border-bottom:1px solid #c8c8c8;line-height:14px;font-size:10px}
.cells{width:1115px;flex:none}
.letters{display:flex;height:15px;background:#efefef;border-bottom:1px solid #b5b5b5;text-align:center;line-height:14px;color:#444;font-size:10px}
.letters span{border-right:1px solid #c4c4c4;flex:none}
.letters .j{background:#d0d0d0;color:#2f7d45}
.sheet{padding:13px 0 0 12px;font-family:Lato,"Open Sans",sans-serif;font-size:10px}
.band{height:14px;background:#3a589b;color:#fff;font-weight:700;line-height:14px;padding-left:2px;display:flex}
.full{width:1092px}
.full span:first-child{width:586px}
.full .b2{width:376px;text-align:center}
.bands{display:grid;grid-template-columns:441px 632px;gap:19px}
.mid-t{justify-content:center}
table{border-collapse:collapse;table-layout:fixed}
.flows{width:1092px;height:192px;margin:14px 0 13px;line-height:12px}
.flows th,.flows td{padding:0;text-align:center;white-space:nowrap}
.flows th:first-child{text-align:left;padding-left:2px;font-weight:400}
.flows thead{background:#93aadd}
.flows thead th,.flows thead th:first-child{font-weight:700;color:#111}
.charts{display:grid;grid-template-columns:444px 635px;column-gap:16px;align-items:start;margin:5px 0 24px}
.chart{border:1px solid #d9d9d9;height:258px;margin-top:2px;width:100%}
.up2{margin:0 0 2px}
.chart svg{display:block;width:100%;height:170px;overflow:visible;stroke:none}
.chart text{font:9px Lato,sans-serif;fill:#595959;text-anchor:end}
.chart table{margin-left:15px;height:82px;font-size:8px;line-height:11px;color:#595959}
.chart td,.chart th{border:1px solid #d9d9d9;padding:0;text-align:center;font-weight:400;white-space:nowrap}
.chart thead th:first-child{border-color:transparent #d9d9d9 #d9d9d9 transparent}
.chart tbody th{text-align:left;padding-left:2px}
.key{display:inline-block;width:18px;height:5px;margin-right:3px;vertical-align:1px}
.key.ln{height:2px;vertical-align:2px}
.x-scroll{width:12px;background:#f1f1f1;display:flex;flex-direction:column;align-items:center;padding:5px 0 2px}
.x-scroll .thumb{width:6px;height:174px;border-radius:3px;background:#747474;margin:4px 0 auto}
.tri.u{border:3px solid transparent;border-bottom:5px solid #666;border-top:0}
.tri.d{border:3px solid transparent;border-top:5px solid #666;border-bottom:0}
.x-tabs{height:24px;background:#e6e9ec;display:flex;align-items:center;color:#333;font-size:10px;line-height:14px;white-space:nowrap;border-bottom:1px solid #d0d4d8}
.ch{font-size:16px;width:25px;text-align:center;color:#999;margin-left:8px}
.ch2{color:#333;margin:0 25px 0 0}
.x-tabs a{padding:0 9px;border-right:1px solid #c9cdd1}
.x-tabs .cur{background:#fff;height:24px;font-weight:600;padding:3px 6px 0;margin:0 2px;border:0;color:#222}
.cur span{display:block;border-bottom:2px solid #1f7f42;line-height:15px}
.x-tabs .cutoff{width:68px;padding-right:0;overflow:hidden;border:0}
.dots{margin-left:7px;font-weight:700}
.add{font-size:14px;width:24px;text-align:center}
.dots+.add{margin-left:8px}
.hs{display:flex;align-items:center;justify-content:space-between;width:50px;height:13px;background:#fff;border-radius:6px;padding:0 3px}
.hs .tri{border-width:3px 0 3px 5px;border-left-color:#666}
.hs .tri.l{border-width:3px 5px 3px 0;border-right-color:#666}
.bar{width:23px;height:6px;border-radius:3px;background:#747474}
.x-status{height:17px;background:#f3f3f3;display:flex;align-items:center;padding:0 8px;font-size:8px;color:#444;line-height:12px}
.s1,.s2i{width:11px;height:11px;margin-left:12px}
.s2i{margin-right:3px}
.x-status b{font-size:8px;font-weight:600}
.views{display:flex;margin-left:auto;margin-right:6px}
.views span{width:30px;height:16px;display:grid;place-items:center}
.vsel{background:#dedede}
.views svg{width:10px;height:10px;overflow:visible;color:#555}
.pm{width:9px;text-align:center;font-size:10px}
input[type=range]{appearance:none;width:76px;height:9px;margin:0;background:linear-gradient(#999,#999) center/100% 1px no-repeat}
input[type=range]::-webkit-slider-thumb{appearance:none;width:4px;height:9px;background:#666}
.pc{margin-left:7px;width:18px}
```
FILE: sheet.js
```js
// Sheet data and chart drawing for the spreadsheet figure.
const years = ['2023', '2024', '2025', '2026', '2027'];
const months = ['Jan', 'Feb', 'Mar', 'Apr', 'May', 'Jun', 'Jul', 'Aug', 'Sep', 'Oct', 'Nov', 'Dec'];
const fill = (v, n) => Array(n).fill(v);
const fmt = n => n.toLocaleString('en-US');

const operatingY = [481690, 682599, 710794, 802446, 899003];
const closingY = [946562, 1348380, 1421589, 1604892, 1798006];
const operatingM = [476044, 476048, 478206, 479421, 478751, 482121, 480104, 485046, 485049, 485052, 481689, 481690];
const changeM = [450000, ...operatingM.slice(1)];
const closingM = [952088, 935277, 939593, 942024, 940684, 947424, 943391, 953274, 953280, 953287, 946560, 946562];
const receiptsM = [471367, 475576, 482478, 488202, 491568, 499986, 501669, 512050, 516259, 520468, 520468, 527482];

const debtY = ['-16,818', '-16,818', '0', '0', '0'];
const debtM = ['-', ...fill('-16,818', 11)];
const none = n => fill('-', n);
const rows = [
  ['Cash Receipts', [527482, 860666, 880113, 994678, 1115374].map(fmt), receiptsM.map(fmt)],
  ['Cash Payments', fill('-510', 5), fill('-510', 12)],
  ['Other Operating Cash Flows', debtY, debtM],
  ['Operating Cash Flows', operatingY.map(fmt), operatingM.map(fmt)],
  ['Capital Expenditure', ['-', '-', '0', '0', '0'], ['450,000', ...none(11)]],
  ['Other Investing Cash Flows', none(5), none(12)],
  ['Investing Cash Flows', none(5), ['450,000', ...none(11)]],
  ['Debt Drawdowns/(Repayments', debtY, debtM],
  ['Equity Raisings/(Buybacks)', none(5), none(12)],
  ['Other Financing Cash Flows', none(5), none(12)],
  ['Financing Cash Flows', debtY, debtM],
  ['Change In Cash Held', operatingY.map(fmt), changeM.map(fmt)],
  ['Closing Cash', closingY.map(fmt), closingM.map(fmt)]
];

const widths = [12, 46, 46, 47, 65, 57, 60, 60, 60, 20, 66, 52, 53, 52, 52, 51, 52, 51, 51, 50, 50, 51];
const byId = id => document.getElementById(id);
byId('letters').innerHTML = widths.map((w, i) =>
  `<span class="${i === 9 ? 'j' : ''}" style="width:${w}px">${String.fromCharCode(65 + i)}</span>`).join('');
byId('rows').innerHTML = Array.from({ length: 41 }, (_, i) => `<li>${i + 1}</li>`).join('');

const cols = [139, ...widths.slice(4)];
const cells = (tag, list) => list.map(v => `<${tag}>${v}</${tag}>`).join('');
byId('flows').innerHTML =
  `<colgroup>${cols.map(w => `<col style="width:${w}px">`).join('')}</colgroup>` +
  `<thead><tr>${cells('th', ['Year Ending', ...years, '', ...months])}</tr></thead><tbody>` +
  rows.map(([name, y, m]) => `<tr><th>${name}</th>${cells('td', [...y, '', ...m])}</tr>`).join('') + '</tbody>';

function chart(id, o) {
  const y = v => o.zero - v / o.unit;
  let s = '';
  for (let v = o.max; v >= -200000; v -= 200000) {
    s += `<text x="109" y="${y(v) + 3}">${fmt(v)}</text>`;
    if (v >= 0) s += `<path d="M${o.left} ${Math.round(y(v)) + 0.5}h${o.step * o.labels.length}" stroke="#d9d9d9"/>`;
  }
  const bar = (i, off, v, w, c) => v ? `<rect x="${o.left + i * o.step + off}" y="${Math.min(y(v), y(0))}" width="${w}" height="${Math.abs(v) / o.unit}" fill="${c}"/>` : '';
  o.labels.forEach((_, i) => {
    s += bar(i, o.off[0], o.op[i], o.w, '#4a72c6') + bar(i, o.off[1], o.inv[i], o.w, '#e5812c') + bar(i, o.off[2], o.fin[i], o.w, '#a5a5a5');
  });
  const line = (d, c) => `<polyline points="${d.map((v, i) => `${o.left + (i + 0.5) * o.step},${y(v)}`).join(' ')}" fill="none" stroke="${c}" stroke-width="2.5" stroke-linecap="round"/>`;
  s += line(o.change, o.yellow) + line(o.closing, o.blue);
  const series = [['Operating Cash Flows', '#4a72c6', o.op], ['Investing Cash Flows', '#e5812c', o.inv], ['Financing Cash Flows', '#a5a5a5', o.fin],
    ['Change In Cash Held', o.yellow, o.change], ['Closing Cash', o.blue, o.closing]];
  byId(id).innerHTML = `<svg>${s}</svg><table style="width:${101 + o.step * o.labels.length}px"><colgroup><col style="width:101px"></colgroup>` +
    `<thead><tr>${cells('th', ['', ...o.labels])}</tr></thead><tbody>` +
    series.map(([n, c, d], i) => `<tr><th><i class="key ${i > 2 ? 'ln' : ''}" style="background:${c}"></i>${n}</th>${cells('td', d.map(fmt))}</tr>`).join('') + '</tbody></table>';
}
chart('c1', { labels: years, left: 116, step: 63, zero: 155, unit: 13793, max: 2000000, off: [13, 25, 41], w: 11,
  op: operatingY, inv: fill(0, 5), fin: [-16818, -16818, 0, 0, 0], change: operatingY, closing: closingY, yellow: '#f3bf08', blue: '#5f9bd8' });
chart('c2', { labels: months, left: 116, step: 42, zero: 146, unit: 8759, max: 1200000, off: [8, 17, 27], w: 8,
  op: operatingM, inv: [450000, ...fill(0, 11)], fin: [0, ...fill(-16818, 11)], change: changeM, closing: closingM, yellow: '#ffd75a', blue: '#2f6fb7' });
```
